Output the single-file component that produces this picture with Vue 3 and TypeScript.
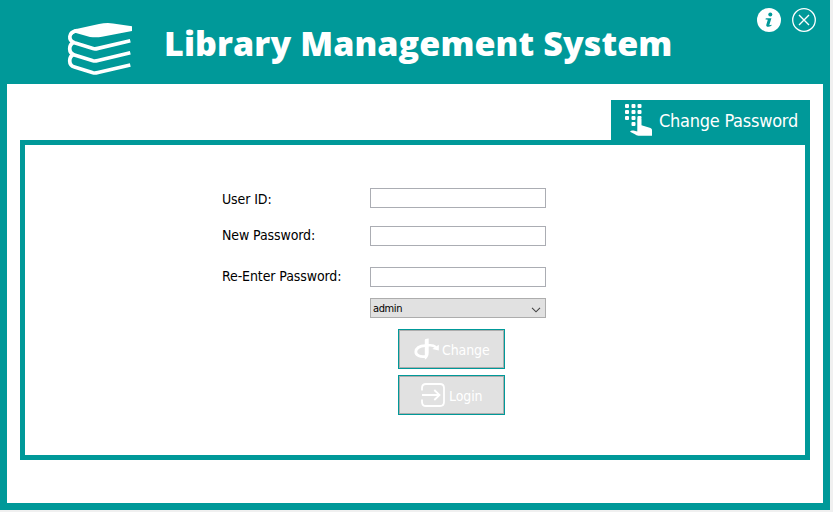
<script setup lang="ts">
import { ref } from 'vue'

const userId = ref('')
const password = ref('')
const confirmPassword = ref('')
const role = ref('admin')

const keypadDots = [
  [0, 0], [6.5, 0], [12.5, 0],
  [0, 6], [6.5, 6], [12.5, 6],
  [0, 12], [6.5, 12], [12.5, 12],
  [6.5, 18],
]
</script>

<template>
  <div class="window">
    <header class="header">
      <svg class="books" viewBox="0 0 66 54" width="66" height="54">
        <path d="M7 7.6 L32 2 Q39 .6 46 1.4 L65 4.2 V9 L35 14.8 Q29 15.8 23 14.9 L9 11 Q7 10.5 5 13 Z" fill="#fff" />
        <g fill="none" stroke="#fff" stroke-width="3.7">
          <path d="M10 8.6 C.8 10 1 18.6 7.5 20.8 L26 26.6 Q28 27.2 31 26.4 L63.3 18.8" />
          <path d="M7 20 C1.2 23 1.2 31 7.5 33 L26 38.8 Q28 39.3 31 38.5 L63.3 30.8" />
          <path d="M7 32 C1.2 35 1.2 43.2 7.5 45 L26 50.8 Q28 51.3 31 50.5 L63.3 43" />
        </g>
      </svg>
      <h1 class="title">Library Management System</h1>
      <div class="actions">
        <svg viewBox="0 0 24 24" width="24" height="24">
          <circle cx="12" cy="12" r="12" fill="#fff" />
          <g fill="#099">
            <circle cx="13.3" cy="6.5" r="2" />
            <path d="M8.8 10.3 H14.4 L12.4 16.7 Q12.2 17.6 14.7 16.7 L14.4 17.8 C12 19.3 8.7 19.3 9.3 16.8 L10.8 11.7 Q10.8 11.3 8.5 11.4 Z" />
          </g>
        </svg>
        <svg viewBox="0 0 24 24" width="24" height="24" fill="none" stroke="#fff">
          <circle cx="12" cy="12" r="11.3" stroke-width="1.3" />
          <path d="M7 7 L17 17 M17 7 L7 17" stroke-width="1.4" />
        </svg>
      </div>
    </header>

    <main class="body">
      <div class="tab">
        <svg class="keypad" viewBox="0 0 28 33" width="28" height="33" fill="#fff">
          <rect v-for="([x, y], i) in keypadDots" :key="i" :x="x" :y="y" width="4" height="4" rx="1" />
          <path d="M11.3 14 H17.5 V21.5 H12.3 Z" fill="#099" />
          <path d="M12.3 14.8 Q12.3 12.8 14.3 12.8 Q16.5 12.8 16.5 14.8 V21.2 L25.5 24 Q27.3 24.8 27 26.5 V31.8 H13.5 Q11.5 31.8 9.5 30 L5 27.8 Q6 26 8.5 26.5 L12.3 27.5 Z" />
        </svg>
        <span class="tab-text">Change Password</span>
      </div>
      <section class="panel">
        <form class="form" @submit.prevent>
          <label class="label" for="user">User ID:</label>
          <input id="user" v-model="userId" class="field">
          <label class="label second" for="pass">New Password:</label>
          <input id="pass" v-model="password" class="field" type="password">
          <label class="label third" for="confirm">Re-Enter Password:</label>
          <input id="confirm" v-model="confirmPassword" class="field" type="password">
          <button class="combo" type="button">
            <span class="combo-text">{{ role }}</span>
            <svg class="chevron" viewBox="0 0 10 6" width="10" height="6" fill="none" stroke="#444" stroke-width="1.1">
              <path d="M1 .8 L5 4.8 L9 .8" />
            </svg>
          </button>
          <div class="buttons">
            <button class="button change" type="submit">
              <svg viewBox="0 0 25 22" width="25" height="22" fill="none" stroke="#fff">
                <path d="M12 7.6 C5 7.4 1.8 10.8 1.8 13.8 C1.8 17.5 6 19.2 12 18.3" stroke-width="2.8" />
                <path d="M10.8 21.8 V2.5 Q10.8 .4 14.7 .6 V14.5 Q14.7 19.5 10.8 21.8 Z" fill="#fff" stroke="none" />
                <path d="M12 7.3 H16 Q19.5 7.2 22 9.2" stroke-width="2.4" />
                <path d="M24.8 6.8 V12.6 L18.3 11 Z" fill="#fff" stroke="none" />
              </svg>
              <span>Change</span>
            </button>
            <button class="button login" type="button">
              <svg viewBox="0 0 24 24" width="24" height="24" fill="none" stroke="#fff" stroke-width="1.8">
                <path d="M1 7.5 V5 Q1 1 5 1 H19 Q23 1 23 5 V19 Q23 23 19 23 H5 Q1 23 1 19 V16.5" />
                <path d="M1 12 H18.3 M13.3 7 L18.5 12 L13.3 17" />
              </svg>
              <span>Login</span>
            </button>
          </div>
        </form>
      </section>
    </main>
  </div>
</template>

<style>
html,
body {
  background: #f0f0f0;
  overflow: hidden;
}
</style>

<style scoped>
* {
  box-sizing: border-box;
}

.window {
  width: 830px;
  height: 510px;
  background: #099;
  padding: 0 7px 7px;
  font-family: "DejaVu Sans Condensed", "Noto Sans", sans-serif;
  color: #fff;
}

.header {
  height: 84px;
  display: flex;
  align-items: flex-start;
}

.books {
  margin: 22px 0 0 60px;
  flex: none;
}

.title {
  margin: 19px 0 0 31px;
  width: 560px;
  font-family: "Open Sans", "Noto Sans", sans-serif;
  font-size: 34px;
  line-height: 48px;
  font-weight: 800;
  letter-spacing: 0.1px;
  white-space: nowrap;
}

.actions {
  display: flex;
  gap: 11px;
  margin: 8px 0 0 33px;
}

.body {
  height: 419px;
  padding: 16px 13px 43px;
  background: #fff;
  display: flex;
  flex-direction: column;
}

.tab {
  align-self: flex-end;
  display: flex;
  width: 199px;
  height: 40px;
  padding: 4px 0 0 14px;
  background: #099;
}

.tab-text {
  margin-left: 6px;
  font-size: 18px;
  line-height: 33px;
  letter-spacing: -0.25px;
  white-space: nowrap;
}

.panel {
  width: 790px;
  height: 320px;
  border: 5px solid #099;
  padding: 43px 0 0 197px;
}

.form {
  display: grid;
  grid-template-columns: 148px 176px;
  grid-template-rows: 38px 41px 31px 31px auto;
  align-items: start;
}

.label {
  color: #000;
  font-size: 14px;
  line-height: 20px;
  letter-spacing: -0.1px;
  white-space: nowrap;
  padding-top: 1px;
}

.second,
.third {
  padding-top: 0;
  margin-top: -1px;
}

.field {
  width: 176px;
  height: 20px;
  margin: 0;
  padding: 0 3px;
  border: 1px solid #abadb3;
  background: #fff;
  outline: none;
}

.combo {
  grid-column: 2;
  display: flex;
  align-items: center;
  justify-content: space-between;
  height: 20px;
  padding: 2px 4px 0 2px;
  border: 1px solid #adadad;
  background: #e1e1e1;
  color: #000;
  font: 11px/16px "DejaVu Sans Condensed", "Noto Sans", sans-serif;
  letter-spacing: -0.4px;
}

.combo-text {
  margin-top: -1px;
}

.chevron {
  margin-top: 1px;
}

.buttons {
  grid-column: 2;
  margin-left: 28px;
  display: flex;
  flex-direction: column;
  gap: 6px;
}

.button {
  width: 107px;
  height: 40px;
  display: flex;
  align-items: center;
  padding: 0;
  border: 1px solid #099;
  box-shadow: inset 0 0 0 1px #adadad;
  background: #e1e1e1;
  color: #fff;
  font: 14px/20px "DejaVu Sans Condensed", "Noto Sans", sans-serif;
  letter-spacing: -0.1px;
}

.button span {
  padding-top: 2px;
}

.change {
  padding-left: 15px;
  gap: 3px;
}

.login {
  padding-left: 22px;
  gap: 4px;
}
</style>
